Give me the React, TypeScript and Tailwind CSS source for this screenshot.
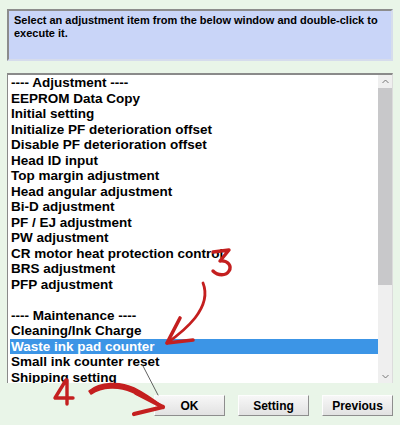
import React from 'react';

const items = [
  '---- Adjustment ----',
  'EEPROM Data Copy',
  'Initial setting',
  'Initialize PF deterioration offset',
  'Disable PF deterioration offset',
  'Head ID input',
  'Top margin adjustment',
  'Head angular adjustment',
  'Bi-D adjustment',
  'PF / EJ adjustment',
  'PW adjustment',
  'CR motor heat protection control',
  'BRS adjustment',
  'PFP adjustment',
  '',
  '---- Maintenance ----',
  'Cleaning/Ink Charge',
  'Waste ink pad counter',
  'Small ink counter reset',
  'Shipping setting',
];

const selected = 'Waste ink pad counter';

const Btn = ({ label }: { label: string }) => (
  <button className="w-[71px] h-[21px] bg-gradient-to-b from-[#f7f7f7] to-[#e2e2e2] border border-t-[#fdfdfd] border-l-[#fdfdfd] border-r-[#8e8e8e] border-b-[#8e8e8e] text-[12px] font-bold text-black leading-none">
    {label}
  </button>
);

// red hand-drawn marks over the dialog
const Annotations = () => (
  <svg className="absolute inset-0 pointer-events-none" width="400" height="425" viewBox="0 0 400 425">
    <g fill="none" stroke="#c41f1f" strokeLinecap="round" strokeLinejoin="round">
      <path d="M213 252 L229 250 L220 261 C228 260 232 266 229 271 C226 276 218 276 213 271" strokeWidth="3.4" />
      <path d="M203 283 C207 293 205 305 195 318 C187 328 177 336 167 343" strokeWidth="2.8" />
      <path d="M167 343 L180 318 M167 343 L193 340" strokeWidth="3.6" />
      <path d="M66 380 L55 398 L73 398 M67 380 L67 404" strokeWidth="3.4" />
      <path d="M143 366 L158 395" stroke="#3a3a3a" strokeWidth="0.8" />
    </g>
    <path
      d="M89 391 C100 382 120 381 134 388 C146 394 154 400 162 406 C153 403 143 397 132 392 C118 386 102 387 91 394 Z"
      fill="#c41f1f"
      stroke="#c41f1f"
      strokeWidth="1.5"
      strokeLinejoin="round"
    />
    <path d="M163 407 L136 393 M163 407 L134 414" fill="none" stroke="#c41f1f" strokeWidth="4.2" strokeLinecap="round" />
  </svg>
);

export default function App() {
  return (
    <div
      className="relative w-[400px] h-[425px] bg-[#e9f5e8] flex flex-col px-[7px] pt-[9px] overflow-hidden"
      style={{ fontFamily: '"Liberation Sans", Arial, sans-serif' }}
    >
      <div className="h-[52px] bg-[#c9d5f8] border-2 border-t-[#8c8c8c] border-l-[#8c8c8c] border-r-[#d6dcec] border-b-[#d6dcec] px-[5px] pt-[3px] text-[11px] font-bold leading-[13px] text-black">
        Select an adjustment item from the below window and double-click to execute it.
      </div>

      <div className="mt-[12px] h-[310px] flex bg-white border-t-2 border-l border-t-[#8a8a8a] border-l-[#8a8a8a] border-r border-r-[#dcdcdc] overflow-hidden">
        <div className="flex-1 pl-[2px] overflow-hidden">
          {items.map((t, i) => (
            <div
              key={i}
              className={`h-[15.5px] leading-[15.5px] pl-[1px] text-[13.5px] font-bold whitespace-nowrap ${
                t === selected ? 'bg-[#3c95e6] text-white' : 'text-black'
              }`}
            >
              {t || '\u00a0'}
            </div>
          ))}
        </div>
        <div className="w-[14px] bg-[#efefef] flex flex-col">
          <div className="h-[13px] flex items-center justify-center">
            <svg width="7" height="5" viewBox="0 0 7 5"><path d="M0.5 4 L3.5 1 L6.5 4" fill="none" stroke="#777" strokeWidth="1" /></svg>
          </div>
          <div className="h-[197px] bg-[#c8c8ca]" />
          <div className="flex-1" />
          <div className="h-[14px] flex items-center justify-center">
            <svg width="7" height="5" viewBox="0 0 7 5"><path d="M0.5 1 L3.5 4 L6.5 1" fill="none" stroke="#777" strokeWidth="1" /></svg>
          </div>
        </div>
      </div>

      <div className="mt-[12px] flex justify-end gap-[13px]">
        <Btn label="OK" />
        <Btn label="Setting" />
        <Btn label="Previous" />
      </div>

      <Annotations />
    </div>
  );
}
